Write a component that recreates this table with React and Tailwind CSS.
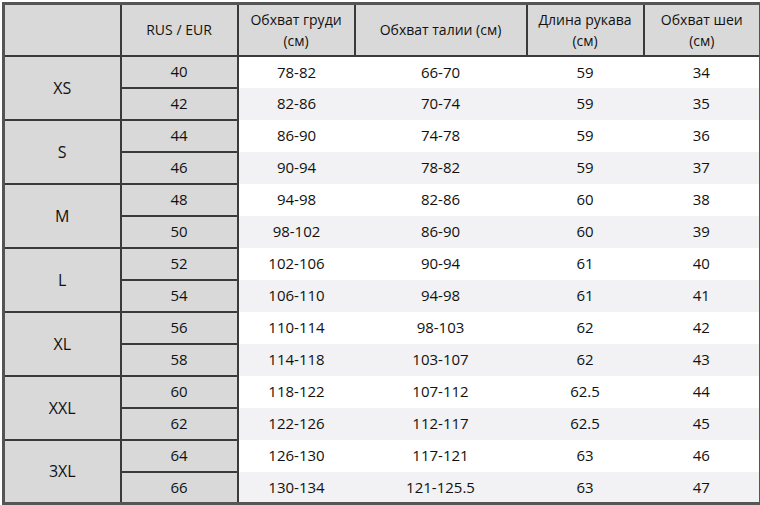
import React from "react";

const sizes = [
  { size: "XS", rows: [["40", "78-82", "66-70", "59", "34"], ["42", "82-86", "70-74", "59", "35"]] },
  { size: "S", rows: [["44", "86-90", "74-78", "59", "36"], ["46", "90-94", "78-82", "59", "37"]] },
  { size: "M", rows: [["48", "94-98", "82-86", "60", "38"], ["50", "98-102", "86-90", "60", "39"]] },
  { size: "L", rows: [["52", "102-106", "90-94", "61", "40"], ["54", "106-110", "94-98", "61", "41"]] },
  { size: "XL", rows: [["56", "110-114", "98-103", "62", "42"], ["58", "114-118", "103-107", "62", "43"]] },
  { size: "XXL", rows: [["60", "118-122", "107-112", "62.5", "44"], ["62", "122-126", "112-117", "62.5", "45"]] },
  { size: "3XL", rows: [["64", "126-130", "117-121", "63", "46"], ["66", "130-134", "121-125.5", "63", "47"]] },
];

const App = () => {
  return (
    <div className="w-[760px] h-[505px] overflow-hidden bg-white pl-[2px] pt-[2px] font-['Open_Sans',sans-serif] text-[15px] text-[#111]">
      <table className="w-[757px] border-collapse border-[3px] border-[#555] table-fixed">
        <colgroup>
          <col className="w-[117px]" />
          <col className="w-[117px]" />
          <col className="w-[117px]" />
          <col className="w-[172px]" />
          <col className="w-[117px]" />
          <col className="w-[117px]" />
        </colgroup>
        <thead>
          <tr className="h-[52px] bg-[#d9d9d9] leading-[21px] text-[14px]">
            <th className="border-2 border-[#3a3a3a] font-normal"></th>
            <th className="border-2 border-[#3a3a3a] font-normal">RUS / EUR</th>
            <th className="border-2 border-[#3a3a3a] font-normal">
              Обхват груди
              <br />
              (см)
            </th>
            <th className="border-2 border-[#3a3a3a] font-normal">Обхват талии (см)</th>
            <th className="border-2 border-[#3a3a3a] font-normal">
              Длина рукава
              <br />
              (см)
            </th>
            <th className="border-2 border-[#3a3a3a] font-normal">
              Обхват шеи
              <br />
              (см)
            </th>
          </tr>
        </thead>
        <tbody>
          {sizes.map((group) =>
            group.rows.map((row, i) => (
              <tr key={group.size + i} className={`h-[32px] text-center ${i === 1 ? "bg-[#f2f1f3]" : "bg-white"}`}>
                {i === 0 && (
                  <td rowSpan={2} className="border-2 border-[#3a3a3a] bg-[#d9d9d9] text-[16px]">
                    {group.size}
                  </td>
                )}
                <td className="border-2 border-[#3a3a3a] bg-[#d9d9d9]">{row[0]}</td>
                <td>{row[1]}</td>
                <td>{row[2]}</td>
                <td>{row[3]}</td>
                <td>{row[4]}</td>
              </tr>
            ))
          )}
        </tbody>
      </table>
    </div>
  );
};

export default App;
